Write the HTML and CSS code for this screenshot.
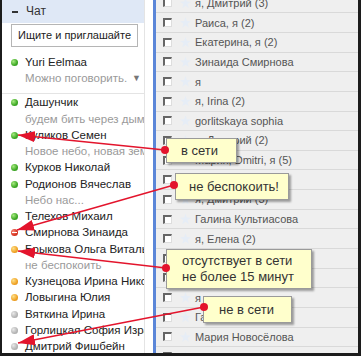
FILE: index.html
```html
<!DOCTYPE html>
<html lang="ru">
<head>
    <meta charset="UTF-8">
    <title>Чат — статусы</title>
    <link rel="stylesheet" href="styles.css">
</head>
<body>
    <div class="shot">
        <aside class="chat">
            <div class="chat-head"><span class="toggle"></span>Чат</div>
            <div class="search">Ищите и приглашайте</div>

            <div class="me">
                <div class="line"><i class="dot on"></i>Yuri Eelmaa</div>
                <div class="line status">Можно поговорить.<span class="caret">&#9660;</span></div>
            </div>

            <ul class="contacts">
                <li class="line"><i class="dot on"></i>Дашунчик</li>
                <li class="line status">будем бить через дымы</li>
                <li class="line"><i class="dot on"></i>Куликов Семен</li>
                <li class="line status">Новое небо, новая земля</li>
                <li class="line"><i class="dot on"></i>Курков Николай</li>
                <li class="line"><i class="dot on"></i>Родионов Вячеслав</li>
                <li class="line status">Небо нас...</li>
                <li class="line"><i class="dot on"></i>Телехов Михаил</li>
                <li class="line"><i class="dot busy"></i>Смирнова Зинаида</li>
                <li class="line"><i class="dot away"></i>Брыкова Ольга Витальевна</li>
                <li class="line status">не беспокоить</li>
                <li class="line"><i class="dot away"></i>Кузнецова Ирина Николаевна</li>
                <li class="line"><i class="dot away"></i>Ловыгина Юлия</li>
                <li class="line"><i class="dot off"></i>Вяткина Ирина</li>
                <li class="line"><i class="dot off"></i>Горлицкая София Израилевна</li>
                <li class="line"><i class="dot off"></i>Дмитрий Фишбейн</li>
            </ul>
        </aside>

        <div class="gutter"></div>

        <main class="mail">
            <div class="row"><span class="check"></span><span class="star"></span>я, Дмитрий (3)</div>
            <div class="row"><span class="check"></span><span class="star"></span>Раиса, я (2)</div>
            <div class="row"><span class="check"></span><span class="star"></span>Екатерина, я (2)</div>
            <div class="row"><span class="check"></span><span class="star"></span>Зинаида Смирнова</div>
            <div class="row"><span class="check"></span><span class="star"></span>я</div>
            <div class="row"><span class="check"></span><span class="star"></span>я, Irina (2)</div>
            <div class="row"><span class="check"></span><span class="star"></span>gorlitskaya sophia</div>
            <div class="row"><span class="check"></span><span class="star"></span>я, Дмитрий (2)</div>
            <div class="row"><span class="check"></span><span class="star"></span>Мария, Dmitri, я (5)</div>
            <div class="row"><span class="check"></span><span class="star"></span>я</div>
            <div class="row"><span class="check"></span><span class="star"></span>я, Дмитрий (3)</div>
            <div class="row"><span class="check"></span><span class="star"></span>Галина Культиасова</div>
            <div class="row"><span class="check"></span><span class="star"></span>я, Елена (2)</div>
            <div class="row"><span class="check"></span><span class="star"></span>Раиса, я</div>
            <div class="row"><span class="check"></span><span class="star"></span>Екатерина, я (3)</div>
            <div class="row"><span class="check"></span><span class="star"></span>я</div>
            <div class="row"><span class="check"></span><span class="star"></span>Галина, я (2)</div>
            <div class="row"><span class="check"></span><span class="star"></span>Мария Новосёлова</div>
            <div class="row"><span class="check"></span><span class="star"></span>я, Дмитрий</div>
        </main>

        <!-- callouts drawn over the screenshot -->
        <div class="note note-online">в сети</div>
        <div class="note note-busy">не беспокоить!</div>
        <div class="note note-idle">отсутствует в сети<br>не более 15 минут</div>
        <div class="note note-offline">не в сети</div>

        <svg class="arrows" width="361" height="356" viewBox="0 0 361 356">
            <defs>
                <marker id="head" markerUnits="userSpaceOnUse" markerWidth="18" markerHeight="11"
                        refX="17" refY="5.5" orient="auto-start-reverse">
                    <path d="M0,0 L17,5.5 L0,11 z" fill="#e3142c"/>
                </marker>
            </defs>
            <g stroke="#e3142c" stroke-width="1.4" fill="none" marker-start="url(#head)">
                <line x1="18" y1="135" x2="165" y2="150"/>
                <line x1="17" y1="230" x2="174" y2="185"/>
                <line x1="18" y1="251" x2="166" y2="268"/>
                <line x1="18" y1="343" x2="204" y2="307"/>
            </g>
            <g fill="#e3142c">
                <circle cx="165" cy="150" r="4"/>
                <circle cx="174" cy="185" r="4"/>
                <circle cx="166" cy="268" r="4"/>
                <circle cx="204" cy="307" r="4"/>
            </g>
        </svg>
    </div>
</body>
</html>
```

FILE: styles.css
```css
:root {
    --frame: #1c1c1c;
    --head-bg: #dfe8f6;
    --line: #e4e4e4;
    --name: #222222;
    --muted: #9a9a9a;
    --bar: #5b86d8;
    --row-bg: #efefef;
    --row-line: #d9d9d9;
    --note-bg: #ffffcc;
}

body {
    margin: 0;
    font-family: Arial, "Liberation Sans", sans-serif;
}

.shot {
    position: relative;
    width: 361px;
    height: 356px;
    box-sizing: border-box;
    border-left: 2px solid var(--frame);
    border-right: 3px solid var(--frame);
    border-bottom: 3px solid var(--frame);
    display: flex;
    overflow: hidden;
    background: #ffffff;
}

/* chat panel */

.chat {
    width: 143px;
    flex: none;
    box-sizing: border-box;
    border-right: 1px solid var(--line);
    overflow: hidden;
    white-space: nowrap;
    font-size: 11.5px;
    color: var(--name);
}

.chat-head {
    height: 23px;
    line-height: 25px;
    background-color: var(--head-bg);
    padding-left: 10px;
    color: #333333;
    display: flex;
    align-items: center;
    font-size: 12px;
}

.toggle {
    width: 6px;
    height: 2px;
    background-color: #333333;
    margin-right: 8px;
}

.search {
    margin: 1px 6px 0 9px;
    height: 23px;
    box-sizing: border-box;
    border: 1px solid #b5b5b5;
    padding-left: 6px;
    line-height: 21px;
    font-size: 11px;
    color: #222222;
}

.me {
    padding-top: 7px;
    padding-bottom: 7px;
    border-bottom: 1px solid var(--line);
}

.contacts {
    list-style: none;
    margin: 0;
    padding: 0;
}

.line {
    line-height: 16.24px;
    height: 16.24px;
    padding-left: 23px;
    position: relative;
}

.status {
    color: var(--muted);
}

.caret {
    position: absolute;
    left: 130px;
    font-size: 9px;
    color: #777777;
}

.dot {
    position: absolute;
    left: 9px;
    top: 5px;
    width: 7px;
    height: 7px;
    border-radius: 50%;
}

.dot.on {
    background: radial-gradient(circle at 35% 35%, #a6ea80, #3da824 60%, #2b8a18);
}

.dot.busy {
    background: radial-gradient(circle at 35% 35%, #f58a7a, #d8321e 60%, #b02010);
}

.dot.busy::after {
    content: "";
    position: absolute;
    left: 1px;
    right: 1px;
    top: 3px;
    height: 1px;
    background-color: #ffffff;
}

.dot.away {
    background: radial-gradient(circle at 35% 35%, #fde08a, #f0a224 60%, #d08010);
}

.dot.off {
    background: radial-gradient(circle at 35% 35%, #e8e8e8, #b5b5b5 60%, #9a9a9a);
}

.gutter {
    width: 8px;
    flex: none;
}

/* mail list */

.mail {
    flex: 1;
    border-left: 3px solid var(--bar);
    background-color: var(--row-bg);
    font-size: 11px;
    color: #555555;
}

.row {
    height: 19.65px;
    box-sizing: border-box;
    border-bottom: 1px solid var(--row-line);
    display: flex;
    align-items: center;
    padding-left: 7px;
    white-space: nowrap;
}

.row:first-child {
    margin-top: -6.35px;
}

.check {
    width: 9px;
    height: 9px;
    box-sizing: border-box;
    background-color: #ffffff;
    border-top: 2px solid #666666;
    border-left: 2px solid #666666;
    border-right: 1px solid #dddddd;
    border-bottom: 1px solid #dddddd;
}

.star {
    width: 11px;
    height: 11px;
    margin: 0 4px 0 8px;
    background-color: #e6edf6;
    clip-path: polygon(50% 0, 62% 36%, 100% 38%, 69% 60%, 80% 97%, 50% 75%, 20% 97%, 31% 60%, 0 38%, 38% 36%);
}

/* callouts */

.note {
    position: absolute;
    box-sizing: border-box;
    background-color: var(--note-bg);
    border: 1px solid #9a9a9a;
    box-shadow: 2px 2px 2px rgba(0, 0, 0, 0.35);
    font-size: 13px;
    color: #333333;
    white-space: nowrap;
}

.note-online {
    left: 164px;
    top: 138px;
    width: 71px;
    height: 25px;
    padding-left: 14px;
    line-height: 23px;
}

.note-busy {
    left: 173px;
    top: 173px;
    width: 114px;
    height: 27px;
    padding-left: 13px;
    line-height: 25px;
}

.note-idle {
    left: 164px;
    top: 249px;
    width: 146px;
    height: 40px;
    padding: 3px 0 0 15px;
    line-height: 16px;
}

.note-offline {
    left: 201px;
    top: 296px;
    width: 89px;
    height: 27px;
    padding-left: 15px;
    line-height: 25px;
}

.arrows {
    position: absolute;
    left: -2px;
    top: 0;
    pointer-events: none;
}
```
